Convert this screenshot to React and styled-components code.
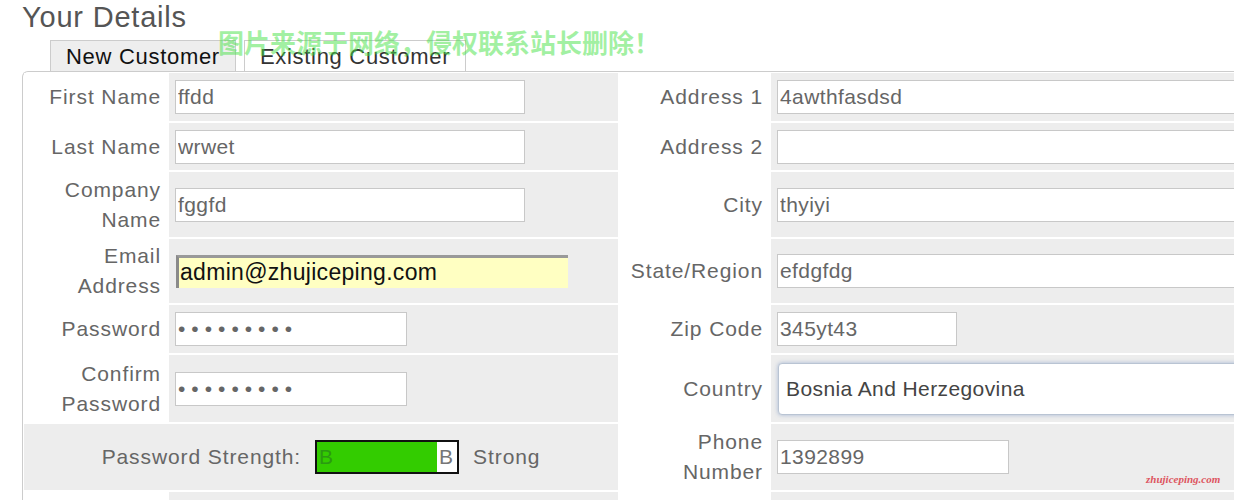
import styled, { createGlobalStyle } from "styled-components";

const GlobalStyle = createGlobalStyle`
  body {
    margin: 0;
    background: #fff;
    overflow: hidden;
    font-family: "Liberation Sans", Arial, sans-serif;
  }
`;

const leftRows = [
  { label: "First Name", value: "ffdd", width: 350 },
  { label: "Last Name", value: "wrwet", width: 350 },
  { label: ["Company", "Name"], value: "fggfd", width: 350 },
  { label: ["Email", "Address"], value: "admin@zhujiceping.com", email: true },
  { label: "Password", value: "123456789", width: 232, password: true },
  { label: ["Confirm", "Password"], value: "123456789", width: 232, password: true },
];

const rightRows = [
  { label: "Address 1", value: "4awthfasdsd", width: 520 },
  { label: "Address 2", value: "", width: 520 },
  { label: "City", value: "thyiyi", width: 520 },
  { label: "State/Region", value: "efdgfdg", width: 520 },
  { label: "Zip Code", value: "345yt43", width: 180 },
  { label: "Country", value: "Bosnia And Herzegovina", select: true },
  { label: ["Phone", "Number"], value: "1392899", width: 232 },
];

const renderLabel = (label) =>
  Array.isArray(label) ? (
    <span>
      {label[0]}
      <br />
      {label[1]}
    </span>
  ) : (
    label
  );

const renderField = (row) => {
  if (row.email) return <EmailInput defaultValue={row.value} />;
  if (row.select)
    return (
      <Select defaultValue={row.value}>
        <option>{row.value}</option>
      </Select>
    );
  return (
    <Input
      type={row.password ? "password" : "text"}
      defaultValue={row.value}
      $width={row.width}
    />
  );
};

const App = () => {
  const cells = [];
  rightRows.forEach((right, i) => {
    const left = leftRows[i];
    if (left) {
      cells.push(<Label key={`ll${i}`}>{renderLabel(left.label)}</Label>);
      cells.push(<Field key={`lf${i}`}>{renderField(left)}</Field>);
    } else {
      cells.push(
        <StrengthCell key="strength">
          Password Strength:
          <Meter>
            <MeterFill>B</MeterFill>
            <MeterRest>B</MeterRest>
          </Meter>
          Strong
        </StrengthCell>
      );
    }
    cells.push(<Label key={`rl${i}`}>{renderLabel(right.label)}</Label>);
    cells.push(<Field key={`rf${i}`}>{renderField(right)}</Field>);
  });

  return (
    <>
      <GlobalStyle />
      <Page>
        <Heading>Your Details</Heading>
        <Tabs>
          <Tab $active>New Customer</Tab>
          <Tab>Existing Customer</Tab>
        </Tabs>
        <Panel>
          <Grid>
            {cells}
            <Label />
            <Field />
            <Label />
            <Field />
          </Grid>
        </Panel>
        <Watermark>图片来源于网络，侵权联系站长删除！</Watermark>
        <SiteMark>zhujiceping.com</SiteMark>
      </Page>
    </>
  );
};

const Page = styled.div`
  position: relative;
  padding-left: 22px;
  width: 1300px;
  color: #666;
`;

const Heading = styled.h2`
  margin: 0;
  height: 40px;
  font-size: 29px;
  font-weight: normal;
  letter-spacing: 0.8px;
  line-height: 34px;
  color: #555;
`;

const Tabs = styled.div`
  display: flex;
  gap: 8px;
  margin-left: 28px;
  height: 31px;
`;

const Tab = styled.div`
  box-sizing: border-box;
  height: 31px;
  padding: 0 15px;
  border: 1px solid #ccc;
  border-bottom: none;
  background: ${(p) => (p.$active ? "#eeeeee" : "#fff")};
  color: ${(p) => (p.$active ? "#111" : "#333")};
  font-size: 22px;
  letter-spacing: 0.7px;
  line-height: 32px;
`;

const Panel = styled.div`
  border-top: 1px solid #ccc;
  border-left: 1px solid #ccc;
  border-top-left-radius: 6px;
  padding: 1px 0 0 1px;
`;

const Grid = styled.div`
  display: grid;
  grid-template-columns: 143px 449px 149px 520px;
  grid-template-rows: 48px 47px 65px 64px 48px 67px 66px 40px;
  gap: 2px;
`;

const Label = styled.div`
  display: flex;
  align-items: center;
  justify-content: flex-end;
  padding-right: 6px;
  background: #fff;
  font-size: 21px;
  letter-spacing: 0.9px;
  line-height: 30px;
  text-align: right;
  color: #666;
`;

const Field = styled.div`
  display: flex;
  align-items: center;
  padding-left: 6px;
  background: #ededed;
`;

const Input = styled.input`
  box-sizing: border-box;
  width: ${(p) => p.$width}px;
  height: 34px;
  padding: 0 2px;
  border: 1px solid #c8c8c8;
  background: #fff;
  font-family: "Liberation Sans", Arial, sans-serif;
  font-size: 21px;
  color: #666;
  outline: none;
  letter-spacing: ${(p) => (p.type === "password" ? "6px" : "0.4px")};
`;

const EmailInput = styled.input`
  box-sizing: border-box;
  width: 392px;
  height: 33px;
  margin-left: 1px;
  padding: 0 1px;
  border: none;
  border-top: 3px solid #999;
  border-left: 3px solid #8a8a8a;
  background: #ffffc2;
  font-family: "Liberation Sans", Arial, sans-serif;
  font-size: 23px;
  letter-spacing: 0.3px;
  color: #111;
  outline: none;
`;

const Select = styled.select`
  box-sizing: border-box;
  width: 520px;
  height: 52px;
  margin-left: 1px;
  padding: 0 7px;
  border: 1px solid #b9c4d3;
  border-radius: 4px;
  box-shadow: 0 0 4px rgba(110, 140, 190, 0.55);
  background: #fff;
  appearance: none;
  font-family: "Liberation Sans", Arial, sans-serif;
  font-size: 21px;
  letter-spacing: 0.4px;
  color: #444;
`;

const StrengthCell = styled.div`
  grid-column: span 2;
  display: flex;
  align-items: center;
  justify-content: center;
  gap: 14px;
  background: #ededed;
  font-size: 21px;
  letter-spacing: 0.9px;
  color: #666;
`;

const Meter = styled.div`
  display: flex;
  box-sizing: border-box;
  width: 144px;
  height: 34px;
  border: 2px solid #111;
  background: #fff;
  font-size: 21px;
  letter-spacing: 0;
  line-height: 30px;
`;

const MeterFill = styled.div`
  width: 118px;
  padding-left: 2px;
  background: #33cc00;
  color: #2a9a12;
`;

const MeterRest = styled.div`
  padding-left: 2px;
  color: #777;
`;

const Watermark = styled.div`
  position: absolute;
  left: 218px;
  top: 24px;
  font-family: "Noto Sans CJK SC", sans-serif;
  font-size: 26px;
  font-weight: bold;
  line-height: 36px;
  color: rgba(70, 225, 70, 0.5);
  pointer-events: none;
`;

const SiteMark = styled.div`
  position: absolute;
  left: 1146px;
  top: 473px;
  font-family: "Liberation Serif", serif;
  font-style: italic;
  font-weight: bold;
  font-size: 11px;
  color: #dd5560;
`;

export default App;
